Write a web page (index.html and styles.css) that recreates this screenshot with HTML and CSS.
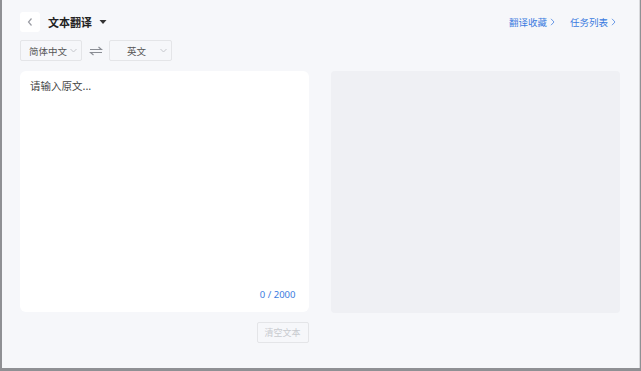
FILE: index.html
```html
<html>
<head>
    <title>文本翻译</title>
    <link rel="stylesheet" href="styles.css">
</head>
<body>
    <div class="window">
        <div class="header">
            <div class="header-left">
                <div class="back-btn">
                    <svg width="8" height="10" viewBox="0 0 8 10"><path d="M5.5 1.5 L2.5 5 L5.5 8.5" fill="none" stroke="#9a9ca3" stroke-width="1.2"/></svg>
                </div>
                <span class="title">文本翻译</span>
                <svg class="caret" width="8" height="6" viewBox="0 0 8 6"><path d="M0.5 1 L7.5 1 L4 5 Z" fill="#333"/></svg>
            </div>
            <div class="header-links">
                <a href="#">翻译收藏<svg class="arrow" width="5" height="8" viewBox="0 0 5 8"><path d="M1 0.8 L4 4 L1 7.2" fill="none" stroke="#6c9be6" stroke-width="1"/></svg></a>
                <a href="#">任务列表<svg class="arrow" width="5" height="8" viewBox="0 0 5 8"><path d="M1 0.8 L4 4 L1 7.2" fill="none" stroke="#6c9be6" stroke-width="1"/></svg></a>
            </div>
        </div>

        <div class="lang-row">
            <div class="lang-select lang-src">
                <span>简体中文</span>
                <svg width="7" height="5" viewBox="0 0 7 5"><path d="M0.5 1 L3.5 4 L6.5 1" fill="none" stroke="#c5c7cc" stroke-width="1"/></svg>
            </div>
            <div class="swap">
                <svg width="14" height="10" viewBox="0 0 14 10"><path d="M1 3.5 H12.5 L9.5 1 M13 6.5 H1.5 L4.5 9" fill="none" stroke="#8a8d94" stroke-width="1.1"/></svg>
            </div>
            <div class="lang-select lang-dst">
                <span class="lang-name">英文</span>
                <svg width="7" height="5" viewBox="0 0 7 5"><path d="M0.5 1 L3.5 4 L6.5 1" fill="none" stroke="#c5c7cc" stroke-width="1"/></svg>
            </div>
        </div>

        <div class="panels">
            <div class="column">
                <div class="source-box">
                    <div class="placeholder">请输入原文...</div>
                    <div class="counter">0 / 2000</div>
                </div>
                <div class="actions">
                    <button class="clear-btn" disabled>清空文本</button>
                </div>
            </div>
            <div class="result-box"></div>
        </div>
    </div>
</body>
</html>
```

FILE: styles.css
```css
body {
    margin: 0;
    padding: 0;
    background: #8f9094;
    font-family: "Noto Sans CJK SC", "Noto Sans", sans-serif;
}
.window {
    width: 638px;
    height: 368px;
    margin-left: 2px;
    background: #f6f7fa;
    border-right: 1px solid #d8d9dc;
    box-sizing: border-box;
    padding: 11px 19px 0 18px;
}
.header {
    display: flex;
    justify-content: space-between;
    align-items: center;
    height: 21px;
}
.header-left {
    display: flex;
    align-items: center;
}
.back-btn {
    width: 20px;
    height: 20px;
    background: #fff;
    border-radius: 3px;
    display: flex;
    align-items: center;
    justify-content: center;
}
.title {
    margin-left: 8px;
    font-size: 11px;
    font-weight: bold;
    color: #222;
}
.caret {
    margin-left: 7px;
}
.header-links {
    display: flex;
    gap: 15px;
    margin-right: 4px;
}
.header-links a {
    display: flex;
    align-items: center;
    font-size: 9.5px;
    color: #3b7be0;
    text-decoration: none;
}
.header-links .arrow {
    margin-left: 3px;
}
.lang-row {
    display: flex;
    align-items: center;
    margin-top: 8px;
    height: 21px;
}
.lang-select {
    height: 21px;
    box-sizing: border-box;
    border: 1px solid #e4e5e8;
    border-radius: 2px;
    display: flex;
    align-items: center;
    font-size: 9.5px;
    color: #555;
}
.lang-src {
    width: 62px;
    padding-left: 8px;
    gap: 3px;
}
.lang-dst {
    width: 63px;
    padding-left: 17px;
    gap: 14px;
}
.swap {
    width: 27px;
    display: flex;
    justify-content: center;
}
.panels {
    display: flex;
    gap: 22px;
    margin-top: 10px;
}
.column {
    width: 289px;
}
.source-box {
    height: 241px;
    background: #fff;
    border-radius: 6px;
    box-sizing: border-box;
    padding: 7px 13px 11px 10px;
    display: flex;
    flex-direction: column;
    justify-content: space-between;
}
.placeholder {
    font-size: 10.5px;
    color: #444;
}
.counter {
    text-align: right;
    font-size: 9.5px;
    color: #3b7be0;
    font-family: "Noto Sans", sans-serif;
}
.actions {
    display: flex;
    justify-content: flex-end;
    margin-top: 10px;
}
.clear-btn {
    width: 52px;
    height: 21px;
    background: transparent;
    border: 1px solid #e4e5e8;
    border-radius: 2px;
    font-family: "Noto Sans CJK SC", sans-serif;
    font-size: 9px;
    color: #c8cacf;
    padding: 0;
}
.result-box {
    width: 290px;
    height: 242px;
    background: #eff0f4;
    border-radius: 4px;
}
```
